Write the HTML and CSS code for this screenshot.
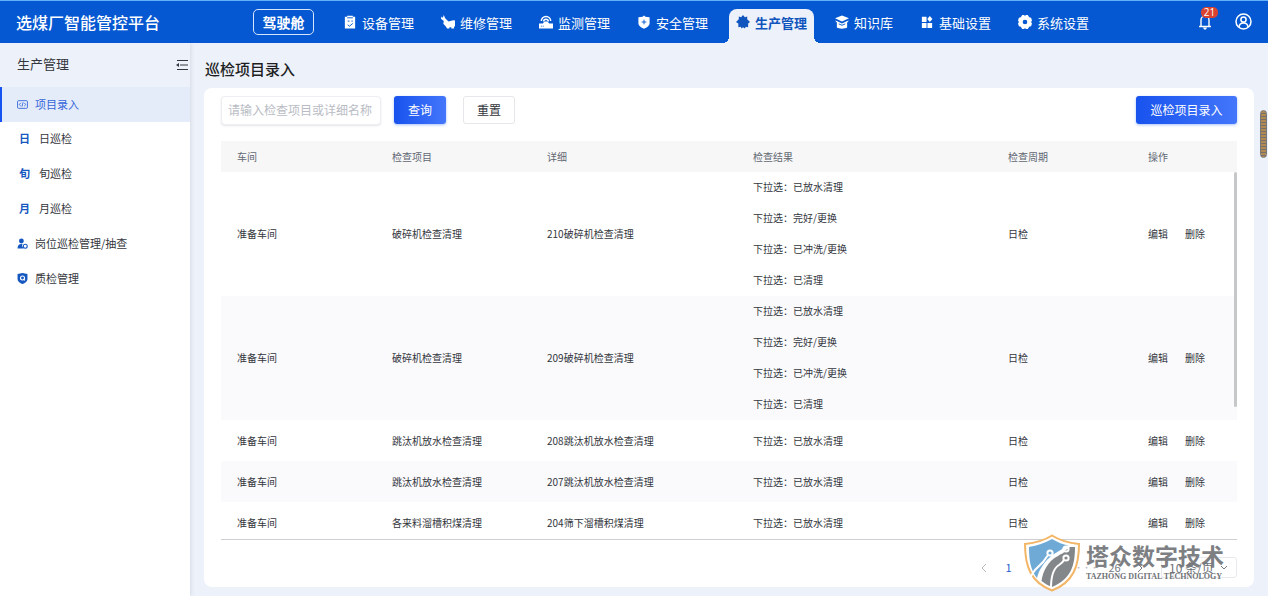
FILE: index.html
```html
<!DOCTYPE html>
<html lang="zh-CN">
<head>
<meta charset="utf-8">
<meta name="viewport" content="width=device-width, initial-scale=1">
<title>选煤厂智能管控平台</title>
<link rel="stylesheet" href="styles.css">
</head>
<body>
<header class="topbar">
  <div class="brand">选煤厂智能管控平台</div>
  <button class="cockpit" type="button">驾驶舱</button>
  <nav class="nav" aria-label="主导航">
    <a class="nav-item" href="#"><svg viewBox="0 0 15 15"><path fill="currentColor" d="M2 2h2.500V.8h6V2H13v12.500H2z"/><path fill="none" stroke="#0558d1" d="M4.500 3h6M5 6.500h2M9 6.500h1.500M5 10.500l2 1.500 3.500-3"/></svg>设备管理</a>
    <a class="nav-item" href="#"><svg viewBox="0 0 15 15"><path fill="currentColor" d="M.5 1.500 2 3 3 0l1.500 3.500L8 7l5-1.500 2 .5v6l-1 .5v2h-3V13H9v1.500H6.500L5 12 2.500 9.500 3 6.500 0 4z"/></svg>维修管理</a>
    <a class="nav-item" href="#"><svg viewBox="0 0 15 15"><path fill="currentColor" d="M0 9h4l2-2h3l2 2h4v5.500H0z"/><path fill="none" stroke="currentColor" stroke-width="1.600" d="M2.500 6.500a5 5 0 0 1 10 0M5 7a2.500 2.500 0 0 1 5 0"/><path stroke="#0558d1" d="M2 12h1M4 12h1"/></svg>监测管理</a>
    <a class="nav-item" href="#"><svg viewBox="0 0 15 15"><path fill="currentColor" d="M7.500.5 9 2l4.500.3v6.200c0 3-3 5-6 6.200-3-1.200-6-3.200-6-6.200V2.300L6 2z"/><path stroke="#0558d1" d="M7.500 5v5M5 7.500h5"/></svg>安全管理</a>
    <a class="nav-item active" href="#" aria-current="page"><svg viewBox="0 0 15 15"><path fill="currentColor" d="M7.500 0 9.500 2.500 12 1.500v3l3 3-2 1.500v4l-2.500-.5-1 2L7.500 13 6 14.500l-1-2-2.500.5V9L0 7.500l3-3v-3l2.500 1z"/></svg>生产管理</a>
    <a class="nav-item" href="#"><svg viewBox="0 0 15 15"><path fill="currentColor" d="M7.500.5 15 3.500 7.500 7 0 3.500zM0 6l2 .3L7.500 9 13 6.300 15 6l-2 2v5.500c-2 1.500-9 1.500-11 0V8z"/><path fill="none" stroke="#0558d1" d="M4 9.500 7.500 11 11 9.500"/></svg>知识库</a>
    <a class="nav-item" href="#"><svg viewBox="0 0 15 15"><path fill="currentColor" d="M2 2h5v5.500H2zM2 8.500h5V14H2zM8 8.500h5V14H8zM10.500 1 13.300 4.200 10.500 7.500 7.800 4.200z"/></svg>基础设置</a>
    <a class="nav-item" href="#"><svg viewBox="0 0 15 15"><path fill="currentColor" fill-rule="evenodd" d="M4.500 0h2l1 1 1-1h2l1.500 2.500 2 .5 1 3-1 1.500 1 1.500-1 3-2 .5-1.500 2.500h-2l-1-1-1 1h-2L3 12.500 1 12 0 9l1-1.500L0 6l1-3 2-.5zM7.500 5a2.500 2.500 0 1 0 0 5 2.500 2.500 0 0 0 0-5z"/></svg>系统设置</a>
  </nav>
  <div class="tools">
    <button class="tool" type="button" aria-label="通知"><svg class="bell" viewBox="0 0 14 17"><path fill="none" stroke="currentColor" stroke-width="1.400" d="M1 13.500h12M3 13.500V7a4 4 0 0 1 8 0v6.500M7 2.500V1"/><path fill="currentColor" d="M5 14.500h4L8 16.500H6z"/></svg><span class="badge">21</span></button>
    <button class="tool" type="button" aria-label="用户"><svg class="user" viewBox="0 0 17 17"><g fill="none" stroke="currentColor" stroke-width="1.500"><circle cx="8.500" cy="8.500" r="7.500"/><circle cx="8.500" cy="6.500" r="2.600"/><path d="M4 14c.5-5.500 8.500-5.500 9 0"/></g></svg></button>
  </div>
</header>
<div class="layout">
  <aside class="sidebar">
    <div class="side-head"><span>生产管理</span>
      <button class="fold" type="button" aria-label="收起菜单"><svg viewBox="0 0 12 10"><path fill="none" stroke="currentColor" d="M1 .5h11M4 5h8M1 9.500h11"/><path fill="currentColor" d="M0 5 3 3v4z"/></svg></button>
    </div>
    <nav class="side-nav" aria-label="生产管理">
      <a class="side-item current" href="#" aria-current="page"><svg viewBox="0 0 10 10"><g fill="none" stroke="currentColor" stroke-width=".8"><rect x=".5" y="1.500" width="9" height="7" rx="1"/><path d="M3.500 3.500 2 5l1.500 1.500M6.500 3.500 8 5 6.500 6.500M5.500 3l-1 4"/></g></svg>项目录入</a>
      <a class="side-item sub" href="#"><b class="glyph">日</b>日巡检</a>
      <a class="side-item sub" href="#"><b class="glyph">旬</b>旬巡检</a>
      <a class="side-item sub" href="#"><b class="glyph">月</b>月巡检</a>
      <a class="side-item" href="#"><svg viewBox="0 0 10 10"><circle cx="4" cy="2.700" r="2.200" fill="#1657c0"/><path fill="#1657c0" d="M.5 9.500C.5 6 2.500 5 5 5.500L4.500 7l1.500 2.500z"/><circle cx="7.500" cy="7.500" r="1.800" fill="none" stroke="#1657c0"/></svg>岗位巡检管理/抽查</a>
      <a class="side-item" href="#"><svg viewBox="0 0 10 10"><path fill="#1657c0" d="M5 0 9.500 1v4.500C9.500 8 7 9.300 5 10 3 9.300.5 8 .5 5.500V1z"/><circle cx="5" cy="4.500" r="1.800" fill="none" stroke="#fff"/><path stroke="#fff" d="m6 5.500 1.200 1.200"/></svg>质检管理</a>
    </nav>
  </aside>
  <main class="main">
    <h1 class="title">巡检项目录入</h1>
    <section class="card">
      <form class="toolbar">
        <input class="search" type="text" aria-label="检查项目或详细名称" placeholder="请输入检查项目或详细名称">
        <button class="btn primary" type="button">查询</button>
        <button class="btn plain" type="button">重置</button>
        <button class="btn primary add" type="button">巡检项目录入</button>
      </form>
      <div class="table-wrap">
        <table class="table">
          <colgroup><col class="c1"><col class="c1"><col class="c3"><col class="c4"><col class="c5"><col class="c6"></colgroup>
          <thead><tr><th>车间</th><th>检查项目</th><th>详细</th><th>检查结果</th><th>检查周期</th><th>操作</th></tr></thead>
          <tbody>
            <tr><td>准备车间</td><td>破碎机检查清理</td><td>210破碎机检查清理</td><td class="multi"><p>下拉选：已放水清理</p><p>下拉选：完好/更换</p><p>下拉选：已冲洗/更换</p><p>下拉选：已清理</p></td><td>日检</td><td><div class="ops"><a href="#">编辑</a><a href="#">删除</a></div></td></tr>
            <tr class="striped"><td>准备车间</td><td>破碎机检查清理</td><td>209破碎机检查清理</td><td class="multi"><p>下拉选：已放水清理</p><p>下拉选：完好/更换</p><p>下拉选：已冲洗/更换</p><p>下拉选：已清理</p></td><td>日检</td><td><div class="ops"><a href="#">编辑</a><a href="#">删除</a></div></td></tr>
            <tr><td>准备车间</td><td>跳汰机放水检查清理</td><td>208跳汰机放水检查清理</td><td>下拉选：已放水清理</td><td>日检</td><td><div class="ops"><a href="#">编辑</a><a href="#">删除</a></div></td></tr>
            <tr class="striped"><td>准备车间</td><td>跳汰机放水检查清理</td><td>207跳汰机放水检查清理</td><td>下拉选：已放水清理</td><td>日检</td><td><div class="ops"><a href="#">编辑</a><a href="#">删除</a></div></td></tr>
            <tr><td>准备车间</td><td>各来料溜槽积煤清理</td><td>204筛下溜槽积煤清理</td><td>下拉选：已放水清理</td><td>日检</td><td><div class="ops"><a href="#">编辑</a><a href="#">删除</a></div></td></tr>
          </tbody>
        </table>
        <span class="table-scroll"></span>
      </div>
      <div class="pager">
        <button class="page off" type="button" aria-label="上一页"><svg viewBox="0 0 8 8"><path fill="none" stroke="currentColor" d="M6 0 2 4l4 4"/></svg></button>
        <button class="page on" type="button">1</button>
        <button class="page" type="button">2</button>
        <button class="page" type="button">3</button>
        <span class="page dots">•••</span>
        <button class="page" type="button">26</button>
        <button class="page" type="button" aria-label="下一页"><svg viewBox="0 0 8 8"><path fill="none" stroke="currentColor" d="m2 0 4 4-4 4"/></svg></button>
        <div class="size-box">
          <select class="size" aria-label="每页条数"><option>10 条/页</option></select>
          <svg viewBox="0 0 8 8"><path fill="none" stroke="currentColor" d="m1 2 3 3 3-3"/></svg>
        </div>
      </div>
    </section>
  </main>
</div>
<span class="page-scroll"></span>
<div class="mark">
  <svg viewBox="0 0 56 58"><path fill="#fff" stroke="#f3b566" stroke-width="2" d="M28 1.500C35 6 45 9 55 10 55 31 50 48 28 56.500 6 48 1 31 1 10 11 9 21 6 28 1.500z"/><path fill="#6fa9d6" d="M28 5c6 3.500 11 5.500 16 6.500L30 20C20 27 15 36 13 44 6.500 36 5 26 5 13c8-1.500 16-4 23-8z"/><path fill="#84878a" d="M51 13c0 19-4 32-23 40-4-1.500-8-4-10.500-6C19 37 24 27 34 22l12-9z"/><g fill="none" stroke="#fff" stroke-width="2"><path d="M7 42 11 36l8-8 5-7M15 46c2-11 7-19 15-24 5-3 7-2 10-5M27 54c0-12 3-20 8-23 3-2 4-3 5-5"/><circle cx="26" cy="19" r="2.600"/><circle cx="42" cy="15" r="2.600"/><circle cx="42" cy="24" r="2.600"/></g></svg>
  <div class="mark-text"><strong>塔众数字技术</strong><span>TAZHONG DIGITAL TECHNOLOGY</span></div>
</div>
</body>
</html>
```

FILE: styles.css
```css
* { box-sizing: border-box; }
body {
  margin: 0;
  min-height: 100vh;
  display: flex;
  flex-direction: column;
  position: relative;
  background: #edf1fa;
  color: #33363c;
  font-family: "Noto Sans CJK SC", sans-serif;
  font-size: 12px;
}
a { color: inherit; text-decoration: none; }
button, input, select { font: inherit; color: inherit; margin: 0; }
button { border: 0; padding: 0; background: none; }
svg { flex: none; display: block; }

.topbar {
  position: relative;
  z-index: 1;
  height: 43px;
  display: flex;
  align-items: flex-start;
  background: #0558d1;
  border-top: 1px solid #62b0fa;
  color: #fff;
}
.brand {
  flex: 0 0 253px;
  padding-left: 16px;
  font-size: 16px;
  font-weight: 500;
  line-height: 42px;
}
.cockpit {
  width: 61px;
  height: 26px;
  margin: 8px 29px 0 0;
  border: 1px solid #d5e5fb;
  border-radius: 5px;
  font-size: 14px;
  font-weight: 700;
  line-height: 22px;
}
.nav { display: flex; gap: 27px; padding-top: 8px; }
.nav-item {
  position: relative;
  height: 34px;
  padding-bottom: 8px;
  display: flex;
  align-items: center;
  gap: 5px;
  font-size: 13px;
  white-space: nowrap;
}
.nav-item svg { width: 14px; height: 14px; }
.nav-item.active {
  margin: 0 -6px;
  padding: 0 7px 8px;
  border-radius: 8px 8px 0 0;
  background: #edf1fa;
  color: #0f55bd;
  font-weight: 700;
}
.active::before, .active::after {
  content: "";
  position: absolute;
  bottom: 0;
  width: 6px;
  height: 6px;
}
.active::before { right: 100%; background: radial-gradient(circle at 0 0, transparent 6px, #edf1fa 6px); }
.active::after { left: 100%; background: radial-gradient(circle at 100% 0, transparent 6px, #edf1fa 6px); }
.tools { display: flex; gap: 23px; margin-left: auto; padding: 12px 16px 0 0; }
.tool { position: relative; }
.bell { width: 14px; height: 17px; }
.user { width: 17px; height: 17px; }
.badge {
  position: absolute;
  left: 3px;
  top: -6px;
  width: 17px;
  height: 11px;
  border-radius: 5px;
  background: #d9432f;
  font-family: "Open Sans", sans-serif;
  font-size: 10px;
  line-height: 11px;
  text-align: center;
}

.layout { flex: 1; display: flex; }
.sidebar { flex: 0 0 190px; background: #fff; box-shadow: 1px 0 4px #d5dae5; }
.side-head {
  height: 44px;
  padding: 0 2px 0 17px;
  display: flex;
  align-items: center;
  justify-content: space-between;
  background: #edf1fa;
  font-size: 13px;
  line-height: 42px;
}
.side-head span { padding-bottom: 2px; }
.fold svg { width: 12px; height: 10px; }
.side-item {
  height: 35px;
  padding: 0 0 3px 17px;
  display: flex;
  align-items: center;
  gap: 7px;
  font-size: 11px;
}
.side-item svg { width: 11px; height: 11px; }
.side-item.sub { padding-left: 19px; gap: 9px; }
.side-item.current {
  padding: 0 0 1px 15px;
  border-left: 2px solid #1554f0;
  background: #e4ecfa;
  color: #3466d9;
}
.glyph { width: 11px; font-size: 11px; color: #1657c0; text-align: center; }

.main {
  flex: 1;
  min-width: 0;
  display: flex;
  flex-direction: column;
  padding: 14px 14px 9px;
}
.title { margin: 0 0 7px 1px; font-size: 15px; line-height: 24px; font-weight: 500; color: #1c1e22; }
.card {
  flex: 1;
  display: flex;
  flex-direction: column;
  padding: 8px 17px 9px;
  border-radius: 8px;
  background: #fff;
}
.toolbar { display: flex; margin-bottom: 16px; }
.search {
  width: 160px;
  height: 29px;
  padding: 0 6px 2px;
  border: 1px solid #eeeff2;
  border-radius: 4px;
  background: #fff;
  box-shadow: 0 1px 2px #e3e5e9;
  outline: 0;
}
.search::placeholder { color: #b9bcc4; opacity: 1; }
.btn { height: 28px; padding-bottom: 1px; border-radius: 3px; font-size: 12px; }
.primary {
  width: 52px;
  margin-left: 13px;
  background: linear-gradient(90deg, #1853ee, #4376fb);
  color: #fff;
  box-shadow: 0 1px 3px #a9c0f8;
}
.plain { width: 52px; margin-left: 17px; border: 1px solid #e6e7ea; background: #fff; }
.add { width: 101px; margin-left: auto; }

.table-wrap { position: relative; border-bottom: 1px solid #cdcfd3; height: 399px; overflow: hidden; }
.table { width: 100%; table-layout: fixed; border-collapse: collapse; font-size: 10px; }
.c1 { width: 155px; }
.c3 { width: 206px; }
.c4 { width: 255px; }
.c5 { width: 140px; }
.c6 { width: 105px; }
.table th {
  height: 31px;
  padding: 0 16px;
  background: #f7f7f8;
  color: #626772;
  font-weight: 400;
  text-align: left;
}
.table td { height: 41px; padding: 0 0 1px 16px; }
.table .multi { padding-bottom: 0; }
.striped { background: #fafafc; }
.multi p { margin: 0; padding-bottom: 1px; line-height: 30px; }
.ops { display: flex; gap: 17px; }
.table-scroll {
  position: absolute;
  right: 0;
  top: 31px;
  width: 3px;
  height: 235px;
  border-radius: 2px;
  background: #c6c7c9;
}
.pager { display: flex; justify-content: flex-end; align-items: center; margin-top: 17px; }
.page { width: 25px; height: 21px; display: grid; place-items: center; font-size: 11px; line-height: 21px; color: #777b83; }
.page svg { width: 8px; height: 8px; }
.page.off { color: #b5b8be; }
.page.on { color: #1f5fcf; }
.page.dots { width: 31px; font-size: 8px; color: #b5b8be; }
.size-box { position: relative; margin-left: 9px; }
.size-box svg { position: absolute; right: 9px; top: 7px; width: 8px; height: 8px; color: #777b83; }
.size {
  display: block;
  width: 76px;
  height: 21px;
  padding: 0 0 0 7px;
  border: 1px solid #e8e9ec;
  border-radius: 3px;
  background: #fff;
  color: #6c7078;
  line-height: 19px;
  appearance: none;
}
.page-scroll {
  position: absolute;
  right: 1px;
  top: 110px;
  width: 7px;
  height: 48px;
  border-radius: 4px;
  border: 1px solid #77777a;
  background: repeating-linear-gradient(#b08a52 0 2px, #77716a 2px 3px);
}
.mark {
  position: absolute;
  right: 44px;
  bottom: 4px;
  display: flex;
  align-items: flex-start;
  gap: 6px;
  pointer-events: none;
}
.mark svg { width: 56px; height: 58px; }
.mark-text { display: flex; flex-direction: column; padding-top: 7px; color: #6f7276; }
.mark-text strong { font-size: 23px; line-height: 28px; font-weight: 700; opacity: .9; }
.mark-text span { font-family: "Liberation Serif", serif; font-size: 8px; line-height: 16px; font-weight: 700; white-space: nowrap; }
```
